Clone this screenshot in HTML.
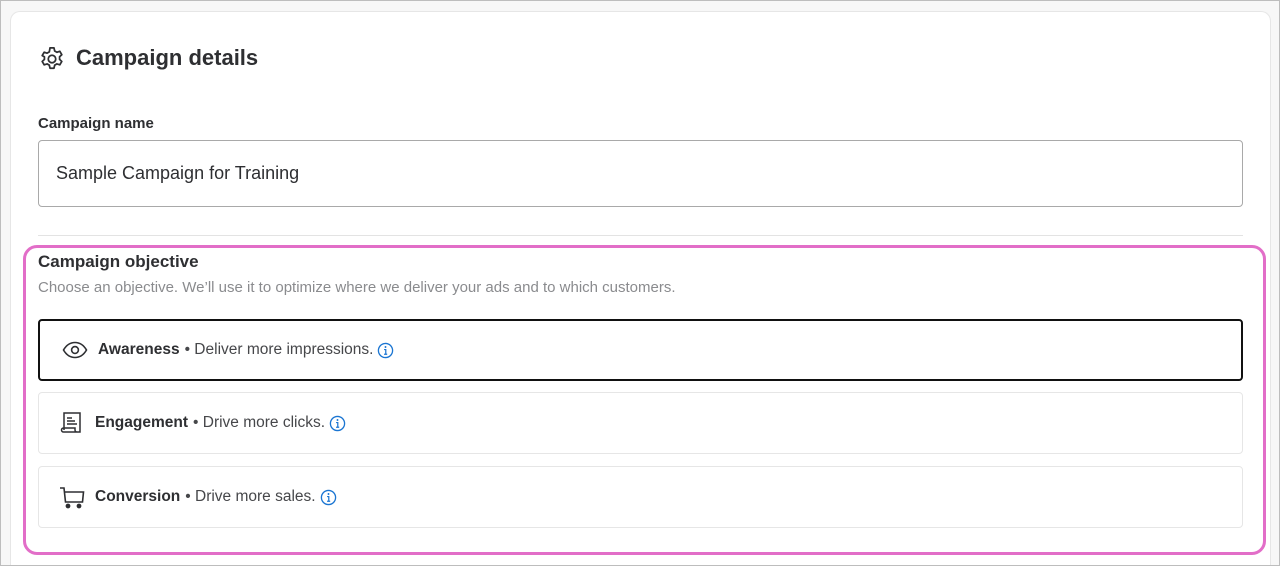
<!DOCTYPE html>
<html style="width:1280px;height:566px;overflow:hidden"><head><style>
*{box-sizing:border-box;margin:0;padding:0}
body{width:1280px;height:566px;background:#f7f7f7;font-family:"Liberation Sans",sans-serif;color:#2e2f32;position:relative;overflow:hidden;border:1px solid #bdbdbd;}
.card{position:absolute;left:9px;top:10px;width:1261px;height:554px;background:#fff;border:1px solid #e6e6e6;border-bottom:none;border-radius:10px 10px 0 0}
.abs{position:absolute}
h1{position:absolute;left:75px;top:44px;font-size:22px;font-weight:bold;color:#2e2f32}
.lbl{font-size:15px;font-weight:bold}
.input{left:37px;top:139px;width:1205px;height:67px;border:1px solid #a9a9a9;border-radius:4px;font-size:18px;padding:22px 0 0 17px;color:#2e2f32}
.sep{left:37px;top:234px;width:1205px;height:1px;background:#e3e3e3}
.pink{left:22px;top:244px;width:1243px;height:310px;border:3px solid #e26ec8;border-radius:14px}
.opt{left:37px;width:1205px;height:62px;border:1px solid #e6e6e6;border-radius:4px;font-size:15.5px;display:flex;align-items:center;color:#46474a}
.opt b{color:#2e2f32;margin-right:5px}
.opt svg.i{margin-left:4px}
</style></head><body>
<div class="card"></div>
<svg class="abs" style="left:37px;top:44px" width="28" height="28" viewBox="0 0 24 24" fill="none" stroke="#2e2f32" stroke-width="1.5"><circle cx="12" cy="12" r="3.2"/><path d="M10.3 2.5h3.4l.6 2.6 1.9 1.1 2.5-.8 1.7 2.9-1.9 1.8v2.2l1.9 1.8-1.7 2.9-2.5-.8-1.9 1.1-.6 2.6h-3.4l-.6-2.6-1.9-1.1-2.5.8-1.7-2.9 1.9-1.8v-2.2L3.6 9.1l1.7-2.9 2.5.8 1.9-1.1z" stroke-linejoin="round"/></svg>
<h1>Campaign details</h1>
<div class="abs lbl" style="left:37px;top:114px">Campaign name</div>
<div class="abs input">Sample Campaign for Training</div>
<div class="abs sep"></div>
<div class="abs pink"></div>
<div class="abs" style="left:37px;top:251px;font-size:17px;font-weight:bold">Campaign objective</div>
<div class="abs" style="left:37px;top:278px;font-size:15px;color:#8a8b8e">Choose an objective. We’ll use it to optimize where we deliver your ads and to which customers.</div>
<div class="abs opt" style="top:318px;border:2px solid #111;padding-left:22px">
<svg width="26" height="18" viewBox="0 0 26 18" fill="none" stroke="#2e2f32" stroke-width="1.6"><path d="M1.5 9C5 3 9 1.5 13 1.5S21 3 24.5 9C21 15 17 16.5 13 16.5S5 15 1.5 9z"/><circle cx="13" cy="9" r="3.4"/></svg>
<span style="margin-left:10px"><b>Awareness</b>• Deliver more impressions.</span>
<svg class="i" width="17" height="17" viewBox="0 0 18 18"><circle cx="9" cy="9" r="7.5" fill="none" stroke="#1a75d2" stroke-width="1.4"/><circle cx="9" cy="5.3" r="1" fill="#1a75d2"/><path d="M7.5 8h1.8v5M7.5 13h3.3" stroke="#1a75d2" stroke-width="1.3" fill="none"/></svg>
</div>
<div class="abs opt" style="top:391px;padding-left:20px">
<svg width="26" height="26" viewBox="0 0 26 26" fill="none" stroke="#2e2f32" stroke-width="1.5"><path d="M5 20V3h16v19H4.5a2 2 0 0 1 0-4H16v2a2 2 0 0 0 2 2"/><path d="M8 8h5M8 11h8M8 14h10"/></svg>
<span style="margin-left:10px"><b>Engagement</b>• Drive more clicks.</span>
<svg class="i" width="17" height="17" viewBox="0 0 18 18"><circle cx="9" cy="9" r="7.5" fill="none" stroke="#1a75d2" stroke-width="1.4"/><circle cx="9" cy="5.3" r="1" fill="#1a75d2"/><path d="M7.5 8h1.8v5M7.5 13h3.3" stroke="#1a75d2" stroke-width="1.3" fill="none"/></svg>
</div>
<div class="abs opt" style="top:465px;padding-left:20px">
<svg width="26" height="26" viewBox="0 0 26 26" fill="none" stroke="#2e2f32" stroke-width="1.6"><path d="M1 4h4l1.5 14h17l1-10H6"/><circle cx="9" cy="22" r="1.6" fill="#2e2f32"/><circle cx="20" cy="22" r="1.6" fill="#2e2f32"/></svg>
<span style="margin-left:10px"><b>Conversion</b>• Drive more sales.</span>
<svg class="i" width="17" height="17" viewBox="0 0 18 18"><circle cx="9" cy="9" r="7.5" fill="none" stroke="#1a75d2" stroke-width="1.4"/><circle cx="9" cy="5.3" r="1" fill="#1a75d2"/><path d="M7.5 8h1.8v5M7.5 13h3.3" stroke="#1a75d2" stroke-width="1.3" fill="none"/></svg>
</div>
</body></html>
